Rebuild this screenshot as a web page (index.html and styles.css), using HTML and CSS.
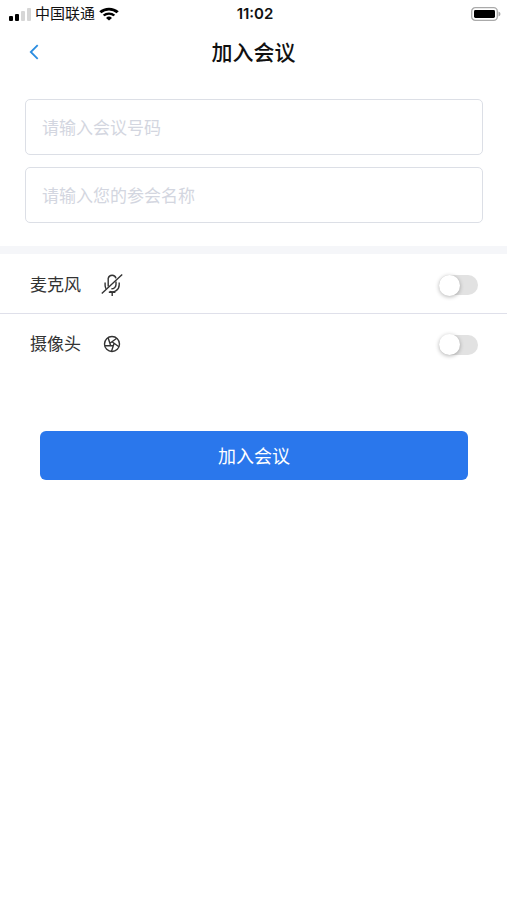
FILE: index.html
```html
<!DOCTYPE html>
<html lang="zh-CN">
  <head>
    <meta charset="utf-8">
    <meta name="viewport" content="width=device-width, initial-scale=1">
    <title>加入会议</title>
    <link rel="stylesheet" href="styles.css">
  </head>
  <body>
    <div class="status-bar">
      <div class="carrier">
        <svg class="signal" width="22" height="13" viewBox="0 0 22 13">
          <rect x="0" y="8" width="4" height="5" rx="1" fill="#000"/>
          <rect x="6" y="6" width="4" height="7" rx="1" fill="#000"/>
          <rect x="12" y="3" width="4" height="10" rx="1" fill="#d6d6d6"/>
          <rect x="18" y="0" width="4" height="13" rx="1" fill="#d6d6d6"/>
        </svg>
        <span>中国联通</span>
        <svg class="wifi" width="20" height="14" viewBox="0 0 18 14" preserveAspectRatio="none">
          <path d="M1.2 5.2a11.2 11.2 0 0 1 15.6 0" fill="none" stroke="#000" stroke-width="2.8"/>
          <path d="M4.2 8.5a6.9 6.9 0 0 1 9.6 0" fill="none" stroke="#000" stroke-width="2.3"/>
          <path d="M9 13.6 6.3 10.9a3.9 3.9 0 0 1 5.4 0z" fill="#000"/>
        </svg>
      </div>
      <time class="clock">11:02</time>
      <svg class="battery" width="30" height="14" viewBox="0 0 30 14">
        <rect x="0.7" y="0.7" width="25.6" height="12.6" rx="3.6" fill="#fff" stroke="#aaa" stroke-width="1.3"/>
        <rect x="3" y="3" width="21" height="8" rx="1.4" fill="#000"/>
        <path d="M27.5 4.6v4.8q2-.8 2-2.4t-2-2.4z" fill="#aaa"/>
      </svg>
    </div>

    <header class="nav">
      <button class="back" type="button" aria-label="返回">
        <svg width="10" height="16" viewBox="0 0 10 16">
          <path d="M8.7 1.2 1.8 8l6.9 6.8" fill="none" stroke="#2b8de0" stroke-width="1.8"/>
        </svg>
      </button>
      <h1>加入会议</h1>
    </header>

    <form>
      <div class="fields">
        <input class="field" type="text" placeholder="请输入会议号码" aria-label="会议号码">
        <input class="field" type="text" placeholder="请输入您的参会名称" aria-label="参会名称">
      </div>

      <div class="options">
        <div class="option">
          <label for="mic">麦克风</label>
          <svg width="22" height="24" viewBox="0 0 22 24" fill="none" stroke="#333" stroke-width="1.4">
            <path d="M7.2 13.4V5.3a4 4 0 0 1 7.8 0"/>
            <path d="M15 8.4v3.2a4.4 4.4 0 0 1-4.6 4.2"/>
            <path d="M4.1 9.4v2.8q0 2.1 1 3.6"/>
            <path d="M18.2 9.4v2.4a7.1 7.1 0 0 1-9.6 6.7"/>
            <path d="M11.2 19v4M7.8 19.2h6.6"/>
            <path d="M.8 20.6 21.2 1.6"/>
          </svg>
          <input class="switch" id="mic" type="checkbox" role="switch">
        </div>
        <div class="option">
          <label for="camera">摄像头</label>
          <svg width="22" height="24" viewBox="0 0 22 24" fill="none" stroke="#333" stroke-width="1.4">
            <circle cx="11" cy="12" r="7.5"/>
            <path d="M11 9.8l6.9 4.9M13.1 11.3l-2.6 8.1M12.3 13.8H3.8M9.7 13.8 7.1 5.7M8.9 11.3l6.9-5"/>
          </svg>
          <input class="switch" id="camera" type="checkbox" role="switch">
        </div>
      </div>

      <div class="actions">
        <button class="join" type="submit">加入会议</button>
      </div>
    </form>
  </body>
</html>
```
FILE: styles.css
```css
* {
  box-sizing: border-box;
}

body {
  margin: 0;
  background-color: #fff;
  color: #333;
  font-family: Inter, "Noto Sans CJK SC", sans-serif;
}

input, button {
  font-family: inherit;
}

.status-bar {
  display: grid;
  grid-template-columns: 1fr auto 1fr;
  align-items: center;
  height: 28px;
  padding: 0 6px 0 9px;
  color: #111;
}

.carrier {
  display: flex;
  align-items: center;
  gap: 4px;
  font-size: 15px;
  line-height: 20px;
}

.clock {
  font-size: 15px;
  font-weight: 600;
  line-height: 20px;
}

.battery {
  justify-self: end;
}

.nav {
  display: grid;
  grid-template-columns: 44px 1fr 44px;
  align-items: center;
  height: 49px;
  padding: 0 12px;
}

.back {
  display: flex;
  justify-content: center;
  padding: 11px 0 13px;
  border: 0;
  background: none;
  cursor: pointer;
}

.nav h1 {
  margin: 0;
  color: #111;
  font-size: 21px;
  font-weight: 500;
  line-height: 28px;
  text-align: center;
}

.fields {
  display: flex;
  flex-direction: column;
  gap: 12px;
  padding: 22px 24px 23px 25px;
}

.field {
  width: 100%;
  height: 56px;
  padding: 1px 16px 0;
  border: 1px solid #dcdfe6;
  border-radius: 5px;
  background-color: #fff;
  color: #333;
  font-size: 17px;
}

.field::placeholder {
  color: #d3d6e0;
  opacity: 1;
}

.options {
  border-top: 8px solid #f5f6f9;
}

.option {
  display: flex;
  align-items: center;
  height: 59px;
  padding: 2px 29px 0 30px;
}

.option + .option {
  border-top: 1px solid #dfe0ea;
}

.option label {
  margin-right: 20px;
  font-size: 17px;
  line-height: 24px;
}

.switch {
  appearance: none;
  display: flex;
  align-items: center;
  width: 39px;
  height: 20px;
  margin: 1px 0 0 auto;
  border-radius: 10px;
  background-color: #e2e2e2;
  cursor: pointer;
}

.switch::before {
  content: "";
  width: 21px;
  height: 21px;
  border-radius: 50%;
  background-color: #fff;
  box-shadow: 0 1px 4px rgba(0, 0, 0, 0.3);
}

.switch:checked {
  background-color: #2a77ec;
}

.switch:checked::before {
  margin-left: auto;
}

.actions {
  padding: 59px 39px 0 40px;
}

.join {
  width: 100%;
  height: 49px;
  padding: 0 0 2px;
  border: 0;
  border-radius: 6px;
  background-color: #2a77ec;
  color: #fff;
  font-size: 18px;
  cursor: pointer;
}
```
